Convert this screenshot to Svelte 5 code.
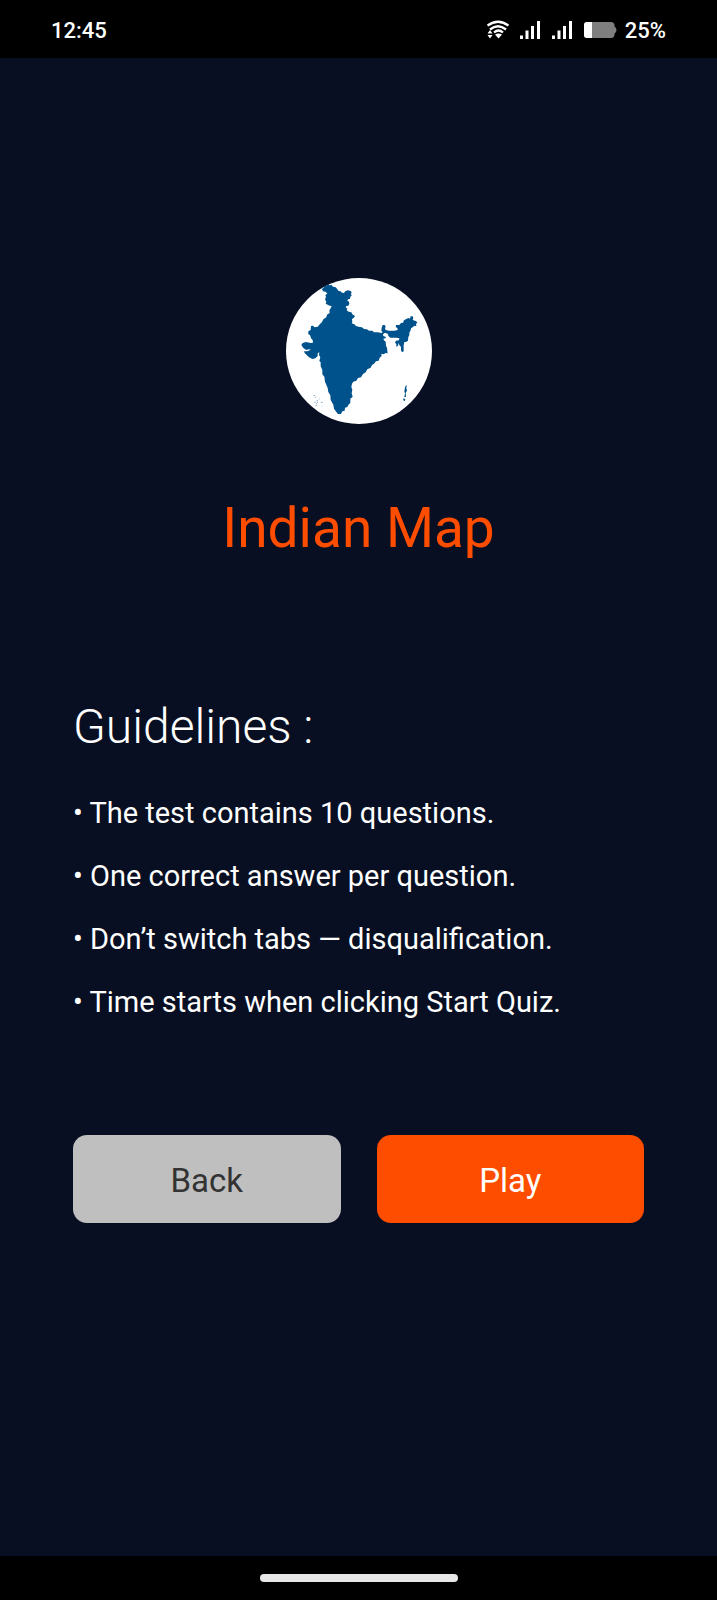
<script>
  const time = '12:45';
  const battery = 25;
  const guidelines = [
    'The test contains 10 questions.',
    'One correct answer per question.',
    'Don’t switch tabs — disqualification.',
    'Time starts when clicking Start Quiz.'
  ];
</script>

<div class="screen">
  <header class="status">
    <span>{time}</span>
    <div class="indicators">
      <svg class="wifi" viewBox="0 0 22 20" aria-hidden="true">
        <g fill="none" stroke="#fff" stroke-width="2.300">
          <path d="M.5 5.500Q11-2 21.500 5.500" />
          <path d="M3 9.500Q11 3 19 9.500" />
          <path d="M7 12.500Q11.500 8.500 16 12.500" />
        </g>
        <path d="M8 14.500Q11.500 12.500 15 14.500L11.500 18.500Z" fill="#fff" />
        <path d="M.5 13.500L3 10L5.500 13.500ZM.5 15L3 18.500L5.500 15Z" fill="#fff" />
      </svg>
      {#each [0, 1] as sim (sim)}
        <svg class="signal" viewBox="0 0 22 20" aria-hidden="true">
          <path
            fill="#fff"
            d="M1 15.500h3v3.500h-3zM6.500 10.500h3v8.500h-3zM12 6h3v13h-3zM18 1h3v18h-3z"
          />
        </svg>
      {/each}
      <svg class="battery" viewBox="0 0 34 18" aria-hidden="true">
        <path
          fill="#7f7f7f"
          d="M4 1H28Q31 1 31.500 4V5.500Q33.500 6.500 33.500 9T31.500 12.500V14Q31 17 28 17H4Q1 17 1 14V4Q1 1 4 1Z"
        />
        <path fill="#fff" d="M9 1V17H4Q1 17 1 14V4Q1 1 4 1Z" />
      </svg>
      <span class="level">{battery}%</span>
    </div>
  </header>

  <main>
    <svg class="emblem" viewBox="16 15 438 438" role="img" aria-label="Map of India">
      <circle cx="235" cy="234" r="219" fill="#fff" />
      <g fill="#00528c">
        <path
          d="M124 48L129 44L130 40L138 38L142 34L146 37L153 36L157 41L165 43L170 49L174 54L180 55L184 59L190 60L194 55L201 52L208 53L213 57L211 63L213 68L209 71L208 78L203 78L200 83L205 86L206 92L203 98L197 99L195 103L200 107L198 112L204 116L212 118L215 124L223 129L219 135L214 138L215 147L213 151L221 154L226 159L237 162L244 163L250 168L259 169L265 173L275 173L280 178L291 178L302 180L306 178L302 173L303 164L306 156L312 156L315 161L313 166L315 171L325 173L341 173L351 171L350 165L345 162L346 156L356 156L361 150L367 149L370 142L378 137L384 135L388 137L390 130L396 130L398 135L396 141L405 144L410 148L406 154L407 160L401 158L397 162L391 166L390 172L386 179L386 187L383 192L382 203L376 207L371 207L369 217L369 235L364 238L361 232L361 221L357 218L354 210L352 218L347 221L347 213L343 209L346 203L355 202L356 196L347 194L329 194L323 189L322 183L313 179L307 184L308 189L316 192L314 196L308 197L310 202L315 206L316 218L319 225L321 241L315 240L309 244L302 242L303 249L297 254L294 263L286 265L280 272L274 276L270 284L260 289L255 298L247 303L241 313L232 315L227 323L218 326L214 332L212 342L215 350L213 361L216 371L209 377L209 389L203 396L200 402L193 404L192 413L185 415L181 423L172 423L167 417L160 407L158 395L150 381L149 367L143 357L141 345L133 326L131 311L125 304L125 291L120 280L120 268L116 264L119 253L115 246L116 238L111 241L111 249L104 256L95 258L84 252L72 240L70 235L80 235L91 230L84 229L77 231L68 225L62 216L66 210L76 207L90 210L97 209L96 201L92 197L88 187L83 183L83 175L90 171L91 159L97 158L102 163L111 161L118 153L124 147L128 139L137 133L139 125L147 120L146 112L150 106L153 99L147 98L135 92L137 87L133 79L136 72L134 66L140 62L135 56L127 55Z"
        />
        <path d="M374 340L378 336L377 345L379 353L375 360L376 372L371 372L373 361L371 354ZM368 376L374 379L372 385L368 382Z" />
        <path
          opacity=".7"
          d="M99 366h3v3h-3zM103 371h2v3h-2zM114 377h3v2h-3zM108 382h3v3h-3zM102 386h2v4h-2zM107 391h2v3h-2zM122 387h3v3h-3zM105 396h3v2h-3zM124 398h2v2h-2zM110 388h2v2h-2z"
        />
      </g>
    </svg>

    <h1>Indian Map</h1>

    <section>
      <h2>Guidelines :</h2>
      <ul>
        {#each guidelines as line (line)}
          <li>• {line}</li>
        {/each}
      </ul>
    </section>

    <div class="actions">
      <button type="button" class="back">Back</button>
      <button type="button" class="play">Play</button>
    </div>
  </main>

  <footer><span class="handle"></span></footer>
</div>

<style>
  :global(body) {
    margin: 0;
    background: #080f22;
  }

  .screen {
    display: flex;
    flex-direction: column;
    min-height: 100vh;
    background: #080f22;
    color: #fff;
    font-family: Roboto, sans-serif;
  }

  .status {
    display: flex;
    align-items: center;
    justify-content: space-between;
    height: 58px;
    padding: 2px 51px 0;
    box-sizing: border-box;
    background: #000;
    font-size: 22px;
    font-weight: 500;
  }

  .indicators {
    display: flex;
    align-items: center;
    gap: 10px;
  }

  .level {
    margin-left: -2px;
  }

  .wifi,
  .signal {
    width: 22px;
    height: 20px;
  }

  .battery {
    width: 34px;
    height: 18px;
  }

  main {
    flex: 1;
    display: flex;
    flex-direction: column;
    padding: 220px 73px 0;
  }

  .emblem {
    align-self: center;
    width: 146px;
    height: 146px;
  }

  h1 {
    margin: 72px 0 0;
    color: #ff4d00;
    font-size: 55px;
    font-weight: 400;
    line-height: 64px;
    text-align: center;
  }

  section {
    margin-top: 137px;
  }

  h2 {
    margin: 0;
    font-size: 48px;
    font-weight: 300;
    line-height: 60px;
  }

  ul {
    display: flex;
    flex-direction: column;
    gap: 23px;
    margin: 36px 0 0;
    padding: 0;
    list-style: none;
    font-size: 29px;
    line-height: 40px;
  }

  .actions {
    display: grid;
    grid-template-columns: 1fr 1fr;
    gap: 36px;
    margin-top: 113px;
  }

  button {
    height: 88px;
    padding: 2px 0 0;
    border: 0;
    border-radius: 14px;
    font-family: inherit;
    font-size: 33px;
    cursor: pointer;
  }

  .back {
    background: #bfbfbf;
    color: #333;
  }

  .play {
    background: #ff4d00;
    color: #fff;
  }

  footer {
    display: flex;
    align-items: center;
    justify-content: center;
    height: 44px;
    background: #000;
  }

  .handle {
    width: 198px;
    height: 8px;
    border-radius: 4px;
    background: #e8e8e8;
  }
</style>
